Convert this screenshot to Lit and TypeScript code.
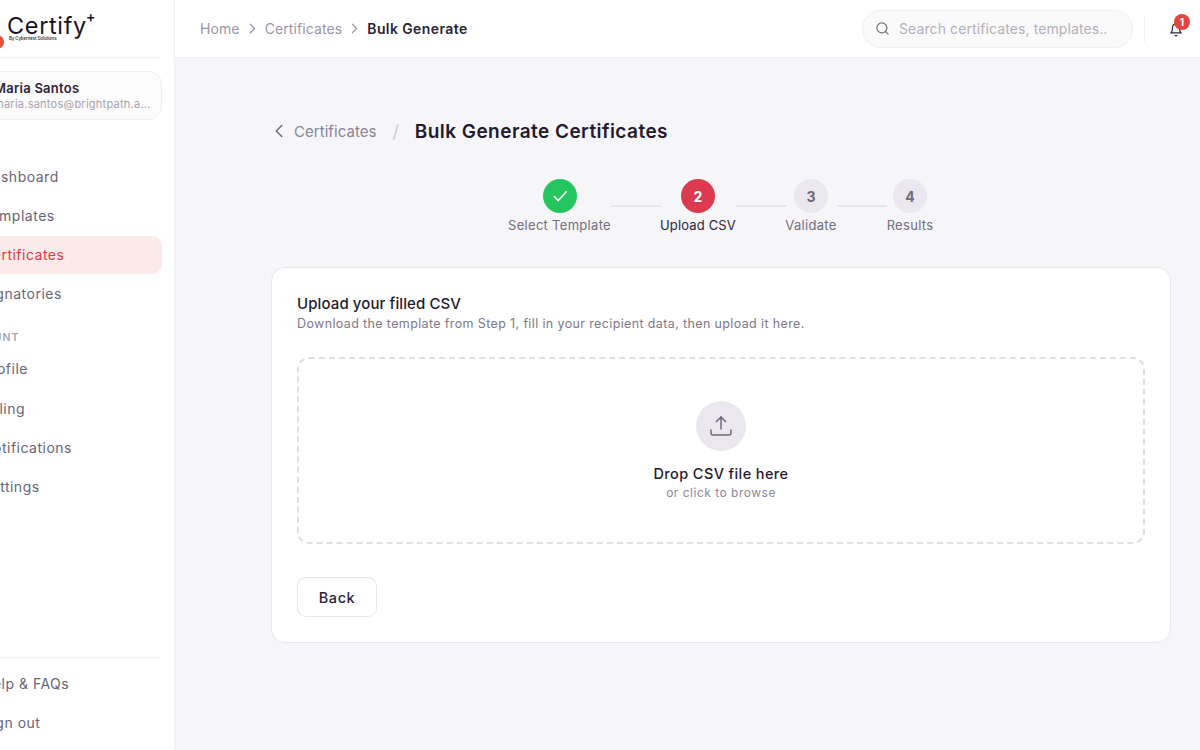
import { LitElement, html, css, svg } from "lit";
import { customElement } from "lit/decorators.js";

const chevronRight = svg`<path d="M9 6l6 6-6 6"/>`;

const NAV_MAIN = [
  { label: "Dashboard" },
  { label: "Templates" },
  { label: "Certificates", active: true },
  { label: "Signatories" },
];
const NAV_ACCOUNT = ["Profile", "Billing", "Notifications", "Settings"];
const STEPS = [
  { n: "", label: "Select Template", state: "done", w: 102 },
  { n: "2", label: "Upload CSV", state: "active", w: 75 },
  { n: "3", label: "Validate", state: "todo", w: 51 },
  { n: "4", label: "Results", state: "todo", w: 47 },
];

@customElement("app-root")
export class AppRoot extends LitElement {
  static styles = css`
    :host {
      display: block;
      width: 1200px;
      height: 750px;
      overflow: hidden;
      font-family: Inter, "Liberation Sans", sans-serif;
      background: #f6f5f8;
      color: #1f1a2e;
    }
    * { box-sizing: border-box; }
    .app { display: flex; height: 750px; }

    .sidebar {
      width: 175px;
      flex: none;
      background: #fff;
      border-right: 1px solid #f0eff3;
      overflow: hidden;
    }
    .side-inner {
      width: 240px;
      height: 750px;
      margin-left: -65px;
      padding-right: 13px;
      display: flex;
      flex-direction: column;
    }
    .brand {
      height: 58px;
      flex: none;
      border-bottom: 1px solid #f2f1f4;
      position: relative;
    }
    .mark {
      position: absolute;
      left: 55px;
      top: 35px;
      width: 14px;
      height: 14px;
      border-radius: 50%;
      background: #e2523b;
    }
    .logo {
      position: absolute;
      left: 72px;
      top: 11px;
      font-size: 23.5px;
      line-height: 30px;
      font-weight: 400;
      letter-spacing: 0.65px;
      color: #17131f;
    }
    .logo sup {
      position: absolute;
      left: 79px;
      top: -2px;
      font-size: 14px;
      line-height: 16px;
      font-weight: 600;
      letter-spacing: 0;
    }
    .by {
      position: absolute;
      left: 74px;
      top: 36px;
      font-size: 4.2px;
      line-height: 6px;
      font-weight: 600;
      color: #333;
    }
    .user {
      margin: 13px 0 0 12px;
      height: 49px;
      flex: none;
      border: 1px solid #f0eff3;
      border-radius: 13px;
      background: #fbfbfc;
      padding: 8px 0 0 46px;
    }
    .user .name {
      font-size: 13px;
      line-height: 17px;
      font-weight: 600;
      letter-spacing: 0.25px;
      color: #2b2438;
    }
    .user .mail {
      font-size: 11px;
      line-height: 14px;
      letter-spacing: 0.25px;
      color: #a7a3b0;
      white-space: nowrap;
    }
    nav {
      margin: 37px 0 0 12px;
      display: flex;
      flex-direction: column;
      gap: 1.3px;
    }
    .item {
      height: 38px;
      display: flex;
      align-items: center;
      padding-left: 35px;
      border-radius: 10px;
      font-size: 14px;
      font-weight: 400;
      letter-spacing: 0.5px;
      color: #67637a;
    }
    .item.active { background: #fce9ea; color: #dc3a45; }
    .section {
      margin: 18px 0 5px 12px;
      padding-left: 12px;
      font-size: 10.5px;
      line-height: 14px;
      font-weight: 600;
      letter-spacing: 1px;
      color: #a7a3b0;
    }
    nav.account { margin-top: 0; }
    .bottom {
      margin-top: auto;
      height: 93px;
      flex: none;
      border-top: 1px solid #f2f1f4;
      padding: 6px 0 0 12px;
      display: flex;
      flex-direction: column;
      gap: 1.3px;
    }

    .main { flex: 1; min-width: 0; display: flex; flex-direction: column; }
    header {
      height: 58px;
      flex: none;
      background: #fff;
      border-bottom: 1px solid #f2f1f4;
      display: flex;
      align-items: center;
      padding: 0 0 0 25px;
    }
    .crumbs {
      display: flex;
      align-items: center;
      gap: 4px;
      font-size: 14px;
      letter-spacing: 0.1px;
      color: #9a96a6;
    }
    .crumbs svg {
      width: 17px;
      height: 17px;
      fill: none;
      stroke: #9a96a6;
      stroke-width: 1.7;
      stroke-linecap: round;
      stroke-linejoin: round;
    }
    .crumbs b { font-weight: 600; letter-spacing: 0.4px; color: #2b2438; }
    .search {
      margin-left: auto;
      width: 271px;
      height: 38px;
      border: 1px solid #efeef2;
      border-radius: 19px;
      background: #fafafb;
      display: flex;
      align-items: center;
      padding-left: 12px;
      gap: 9px;
      font-size: 14px;
      letter-spacing: 0.1px;
      color: #b3b0bb;
      white-space: nowrap;
    }
    .search svg {
      width: 15px;
      height: 15px;
      flex: none;
      fill: none;
      stroke: #75717f;
      stroke-width: 2;
      stroke-linecap: round;
    }
    .vr { width: 1px; height: 26px; background: #f0eff3; margin-left: 11px; flex: none; }
    .bell { position: relative; width: 14px; height: 14px; margin: 2px 17px 0 24px; flex: none; }
    .bell svg {
      width: 14px;
      height: 14px;
      fill: none;
      stroke: #2b2438;
      stroke-width: 2;
      stroke-linecap: round;
      stroke-linejoin: round;
      display: block;
    }
    .badge {
      position: absolute;
      left: 5px;
      top: -8.5px;
      width: 16px;
      height: 16px;
      border-radius: 50%;
      background: #e2453f;
      color: #fff;
      font-size: 10px;
      font-weight: 700;
      line-height: 16px;
      text-align: center;
    }

    .content { padding: 0 29px 0 96px; }
    .titlebar {
      height: 34px;
      margin-top: 56px;
      display: flex;
      align-items: center;
    }
    .titlebar svg {
      width: 22px;
      height: 22px;
      margin-left: -3px;
      fill: none;
      stroke: #6e6a7c;
      stroke-width: 1.6;
      stroke-linecap: round;
      stroke-linejoin: round;
    }
    .back-link {
      margin-left: 4px;
      font-size: 15px;
      letter-spacing: 0.05px;
      color: #8a8696;
    }
    .slash { margin: 0 16px; font-size: 18px; font-weight: 300; color: #c6c3cd; }
    h1 {
      margin: 0;
      font-size: 19px;
      font-weight: 600;
      letter-spacing: 0.45px;
      color: #1f1a2e;
    }
    .stepper {
      margin-top: 31px;
      display: flex;
      justify-content: center;
    }
    .step { display: flex; flex-direction: column; align-items: center; flex: none; }
    .dot {
      width: 34px;
      height: 34px;
      border-radius: 50%;
      display: flex;
      align-items: center;
      justify-content: center;
      font-size: 14px;
      font-weight: 700;
      background: #eae8ee;
      color: #6e6a7c;
    }
    .dot.done { background: #22c55e; }
    .dot.active { background: #dc3a4e; color: #fff; }
    .dot svg {
      width: 20px;
      height: 20px;
      fill: none;
      stroke: #fff;
      stroke-width: 1.9;
      stroke-linecap: round;
      stroke-linejoin: round;
    }
    .label {
      margin-top: 3px;
      font-size: 13px;
      line-height: 18px;
      font-weight: 400;
      letter-spacing: 0.3px;
      color: #726e7e;
      white-space: nowrap;
    }
    .label.active { color: #2b2438; letter-spacing: 0.15px; }
    .line { width: 50px; height: 2px; background: #e8e6ec; margin-top: 26px; flex: none; }

    .card {
      margin-top: 33px;
      height: 376px;
      background: #fff;
      border: 1px solid #e9e7ed;
      border-radius: 14px;
      padding: 25px;
    }
    h2 {
      margin: 1px 0 0;
      font-size: 15px;
      line-height: 20px;
      font-weight: 500;
      letter-spacing: 0.1px;
      color: #1f1a2e;
    }
    .sub {
      margin-top: 1px;
      font-size: 12.5px;
      line-height: 18px;
      letter-spacing: 0.37px;
      color: #7d7989;
    }
    .drop {
      margin-top: 24px;
      height: 187px;
      border: 2px dashed #e0dfe3;
      border-radius: 12px;
      display: flex;
      flex-direction: column;
      align-items: center;
      padding-top: 42px;
    }
    .circle {
      width: 50px;
      height: 50px;
      border-radius: 50%;
      background: #eae8ee;
      display: flex;
      align-items: center;
      justify-content: center;
    }
    .circle svg {
      width: 24px;
      height: 24px;
      fill: none;
      stroke: #6e6a7c;
      stroke-width: 1.5;
      stroke-linecap: round;
      stroke-linejoin: round;
    }
    .drop-title {
      margin-top: 13px;
      font-size: 14.5px;
      line-height: 20px;
      font-weight: 500;
      letter-spacing: 0.4px;
      color: #1f1a2e;
    }
    .drop-sub {
      font-size: 12px;
      line-height: 18px;
      letter-spacing: 0.5px;
      color: #8d8998;
    }
    .btn {
      display: flex;
      align-items: center;
      justify-content: center;
      margin-top: 33px;
      width: 80px;
      height: 40px;
      background: #fff;
      border: 1px solid #e9e7ed;
      border-radius: 9px;
      font-size: 14.5px;
      font-weight: 500;
      letter-spacing: 0.6px;
      color: #2b2438;
    }
  `;

  render() {
    return html`
      <div class="app">
        <aside class="sidebar">
          <div class="side-inner">
            <div class="brand">
              <span class="mark"></span>
              <div class="logo">Certify<sup>+</sup></div>
              <div class="by">By Cybernest Solutions</div>
            </div>
            <div class="user">
              <div class="name">Maria Santos</div>
              <div class="mail">maria.santos@brightpath.a...</div>
            </div>
            <nav>
              ${NAV_MAIN.map(
                (n) => html`<div class="item ${n.active ? "active" : ""}">${n.label}</div>`
              )}
            </nav>
            <div class="section">ACCOUNT</div>
            <nav class="account">
              ${NAV_ACCOUNT.map((n) => html`<div class="item">${n}</div>`)}
            </nav>
            <div class="bottom">
              <div class="item">Help &amp; FAQs</div>
              <div class="item">Sign out</div>
            </div>
          </div>
        </aside>
        <div class="main">
          <header>
            <div class="crumbs">
              <span>Home</span>
              <svg viewBox="0 0 24 24">${chevronRight}</svg>
              <span>Certificates</span>
              <svg viewBox="0 0 24 24">${chevronRight}</svg>
              <b>Bulk Generate</b>
            </div>
            <div class="search">
              <svg viewBox="0 0 24 24"><circle cx="11" cy="11" r="8"/><path d="M21 21l-4.3-4.3"/></svg>
              <span>Search certificates, templates..</span>
            </div>
            <div class="vr"></div>
            <div class="bell">
              <svg viewBox="0 0 24 24">
                <path d="M6 8a6 6 0 0 1 12 0c0 7 3 9 3 9H3s3-2 3-9"/>
                <path d="M10.3 21a1.9 1.9 0 0 0 3.4 0"/>
              </svg>
              <span class="badge">1</span>
            </div>
          </header>
          <div class="content">
            <div class="titlebar">
              <svg viewBox="0 0 24 24"><path d="M15 18l-6-6 6-6"/></svg>
              <span class="back-link">Certificates</span>
              <span class="slash">/</span>
              <h1>Bulk Generate Certificates</h1>
            </div>
            <div class="stepper">
              ${STEPS.map(
                (s, i) => html`
                  ${i > 0 ? html`<div class="line"></div>` : ""}
                  <div class="step" style="width:${s.w}px">
                    <div class="dot ${s.state}">
                      ${s.state === "done"
                        ? html`<svg viewBox="0 0 24 24"><path d="M5 12.5l5 5L19.5 7"/></svg>`
                        : s.n}
                    </div>
                    <div class="label ${s.state === "active" ? "active" : ""}">${s.label}</div>
                  </div>
                `
              )}
            </div>
            <section class="card">
              <h2>Upload your filled CSV</h2>
              <div class="sub">Download the template from Step 1, fill in your recipient data, then upload it here.</div>
              <div class="drop">
                <div class="circle">
                  <svg viewBox="0 0 24 24">
                    <path d="M2 16v3a2 2 0 0 0 2 2h16a2 2 0 0 0 2-2v-3"/>
                    <path d="M16.5 7.5L12 3 7.5 7.5"/>
                    <path d="M12 3v12"/>
                  </svg>
                </div>
                <div class="drop-title">Drop CSV file here</div>
                <div class="drop-sub">or click to browse</div>
              </div>
              <div class="btn">Back</div>
            </section>
          </div>
        </div>
      </div>
    `;
  }
}
